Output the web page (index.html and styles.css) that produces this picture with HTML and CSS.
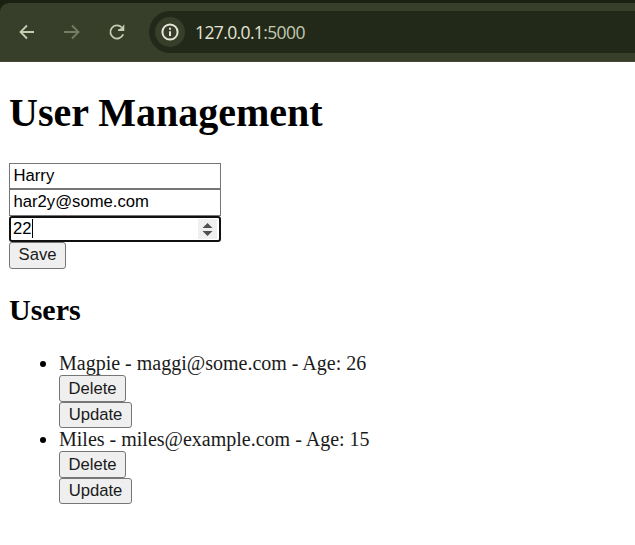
FILE: index.html
```html
<!DOCTYPE html>
<html lang="en">
<head>
<meta charset="utf-8">
<title>User Management</title>
<link rel="stylesheet" href="styles.css">
</head>
<body>
<header class="browser">
  <div class="toolbar">
    <svg class="icon" viewBox="0 0 16 16"><path d="M15 8H1.500M8 1.500 1.500 8 8 14.500"/></svg>
    <svg class="icon icon-off" viewBox="0 0 16 16"><path d="M0 8h13.500M8 1.500 14.500 8 8 14.500"/></svg>
    <svg class="icon icon-reload" viewBox="0 0 16 16"><path d="M14.200 10.300A6.600 6.600 0 1 1 12.800 3.500"/><path class="head" d="M15.300 .3V7H9V5.400L11.800 4.600Z"/></svg>
    <div class="address">
      <span class="info"><svg viewBox="0 0 18 18"><circle cx="9" cy="9" r="7.600"/><path d="M9 8.200V13M9 4.800v1.900"/></svg></span>
      <span class="url">127.0.0.1<span class="port">:5000</span></span>
    </div>
  </div>
</header>
<main class="page">
  <h1>User Management</h1>
  <form class="form">
    <input class="field" type="text" value="Harry">
    <input class="field field-email" type="text" value="har2y@some.com">
    <div class="field field-active">
      <span>22</span><i class="caret"></i>
      <svg class="spinner" viewBox="0 0 19 20"><path d="M4.500 9 9.500 4 14.500 9ZM4.500 12h10L9.500 17Z"/></svg>
    </div>
    <button class="button save" type="button">Save</button>
  </form>
  <h2>Users</h2>
  <ul class="users">
    <li>
      <div class="user">Magpie - maggi@some.com - Age: 26</div>
      <button class="button delete" type="button">Delete</button>
      <button class="button update" type="button">Update</button>
    </li>
    <li>
      <div class="user">Miles - miles@example.com - Age: 15</div>
      <button class="button delete" type="button">Delete</button>
      <button class="button update" type="button">Update</button>
    </li>
  </ul>
</main>
</body>
</html>
```
FILE: styles.css
```css
* { box-sizing: border-box; }
body {
  margin: 0;
  background: #fff;
  color: #000;
  font: 20px/23px "Liberation Serif", serif;
  overflow: hidden;
}
.browser {
  height: 62px;
  padding-top: 3px;
  background: #1a2110;
}
.toolbar {
  display: flex;
  align-items: center;
  height: 59px;
  padding: 0 0 1px 19px;
  background: #373f2b;
  border-bottom: 1px solid #4b4538;
  border-top-left-radius: 9px;
}
.icon {
  width: 16px;
  height: 16px;
  margin-right: 29px;
  fill: none;
  stroke: #c5cdb0;
  stroke-width: 1.8;
}
.icon-off { stroke: #757d67; }
.icon-reload { overflow: visible; }
.icon-reload .head { fill: #c5cdb0; stroke: none; }
.address {
  display: flex;
  flex: 1;
  align-items: center;
  height: 42px;
  margin-left: -5px;
  padding-left: 6px;
  background: #222918;
  border-radius: 21px 0 0 21px;
}
.info {
  display: flex;
  align-items: center;
  justify-content: center;
  width: 30px;
  height: 30px;
  background: #373f2b;
  border-radius: 50%;
}
.info svg {
  width: 18px;
  height: 18px;
  fill: none;
  stroke: #e4e5d8;
  stroke-width: 2;
}
.url {
  margin-left: 10px;
  color: #e4e5d6;
  font: 17.5px/24px "Open Sans", sans-serif;
  letter-spacing: -0.62px;
}
.port { color: #c3c9b2; }
.page { padding: 28px 9px 0; }
h1 {
  margin: 0 0 27px;
  font-size: 40px;
  line-height: 46px;
}
h2 {
  margin: 24px 0 25px;
  font-size: 30px;
  line-height: 34px;
}
.form {
  display: flex;
  flex-direction: column;
  align-items: flex-start;
}
.field {
  display: block;
  width: 212px;
  height: 26px;
  margin: 0;
  padding: 0 3px 1px 3.5px;
  border: 1px solid #767676;
  border-radius: 0;
  background: #fff;
  color: #000;
  font: 16.667px/22px "Liberation Sans", sans-serif;
}
.field-email { height: 27px; }
.field-active {
  display: flex;
  align-items: center;
  padding: 0 2px 1px;
  border: 2px solid #101010;
  border-radius: 3px;
}
.caret {
  width: 1px;
  height: 19px;
  background: #000;
}
.spinner {
  width: 19px;
  height: 20px;
  margin: 1px 0 0 auto;
  background: #efefef;
  fill: #505050;
}
.button {
  display: block;
  height: 27px;
  margin: 0;
  padding: 0;
  border: 1px solid #767676;
  border-radius: 3px;
  background: #efefef;
  color: #1a1a1a;
  font: 16.667px/22px "Liberation Sans", sans-serif;
  text-align: center;
}
.save { width: 57px; padding-bottom: 2px; }
.delete { width: 67px; }
.update { width: 73px; height: 26px; }
.users {
  margin: 0;
  padding-left: 50px;
}
.user { height: 23px; color: #1a1a1a; }
```
